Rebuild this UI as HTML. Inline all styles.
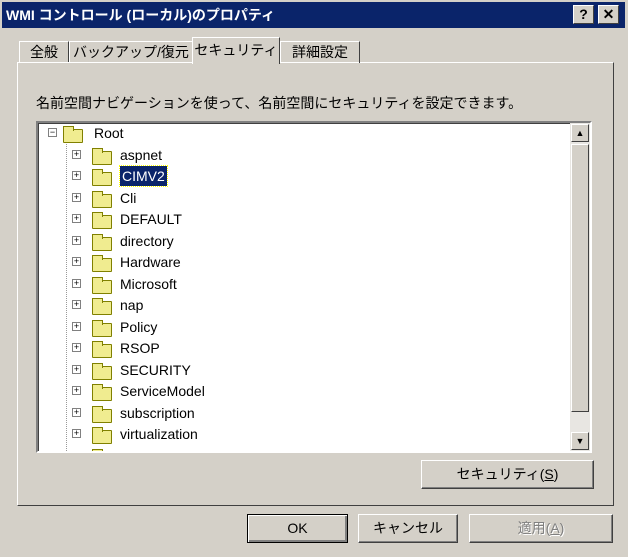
<!DOCTYPE html>
<html><head><meta charset="utf-8"><style>
*{box-sizing:border-box;margin:0;padding:0}
body{width:628px;height:557px;background:#d4d0c8;position:relative;overflow:hidden;font-family:"Liberation Sans","Noto Sans CJK JP",sans-serif;font-size:13px;color:#000}
.abs{position:absolute}
.title{left:2px;top:2px;width:623px;height:26px;background:#0a246a;color:#fff;font-weight:bold;font-size:14px;line-height:26px;padding-left:4px}
.tb{top:5px;width:21px;height:19px;background:#d4d0c8;border:1px solid;border-color:#fff #404040 #404040 #fff;color:#000;font-weight:bold;text-align:center;line-height:17px;font-size:14px}
.tab{top:41px;height:22px;border:1px solid;border-color:#fff #404040 transparent #fff;border-bottom:none;line-height:20px;text-align:center;font-size:14px}
.panel{left:17px;top:62px;width:597px;height:444px;border:1px solid;border-color:#fff #404040 #404040 #fff}
.tree{left:36px;top:121px;width:556px;height:332px;background:#fff;border:2px solid;border-color:#808080 #fff #fff #808080;box-shadow:inset 1px 1px 0 #404040;overflow:hidden}
.row{position:absolute;height:20px;line-height:20px;font-size:14px}
.fold{position:absolute;width:20px;height:14px;background:#f0ec90;border:1px solid #808000;border-radius:1px}
.fold:before{content:"";position:absolute;left:-1px;top:-4px;width:9px;height:4px;background:#f0ec90;border:1px solid #808000;border-bottom:none}
.pm{position:absolute;width:9px;height:9px;border:1px solid #808080;background:#fff;font-size:9px;line-height:7px;text-align:center}
.btn{height:29px;border:1px solid;border-color:#fff #404040 #404040 #fff;box-shadow:inset -1px -1px 0 #808080;text-align:center;line-height:27px;font-size:14px}
.sb{background:#d4d0c8;border:1px solid;border-color:#fff #404040 #404040 #fff;width:18px;height:18px;position:absolute;font-size:9px;text-align:center;line-height:16px}
</style></head><body>
<div class="abs title">WMI コントロール (ローカル)のプロパティ</div>
<div class="abs tb" style="left:573px">?</div>
<div class="abs tb" style="left:598px">✕</div>
<div class="abs tab" style="left:19px;width:50px">全般</div>
<div class="abs tab" style="left:69px;width:124px">バックアップ/復元</div>
<div class="abs panel"></div>
<div class="abs tab" style="left:192px;top:37px;height:27px;width:88px;background:#d4d0c8;line-height:24px">セキュリティ</div>
<div class="abs tab" style="left:280px;width:80px">詳細設定</div>
<div class="abs" style="left:36px;top:93px;font-size:14px">名前空間ナビゲーションを使って、名前空間にセキュリティを設定できます。</div>
<div class="abs tree">
<div class="abs" style="left:28px;top:12px;width:0;height:330px;border-left:1px dotted #999"></div>
<div class="pm" style="left:10px;top:5px">−</div>
<div class="fold" style="left:25px;top:6px"></div>
<div class="row" style="left:56px;top:0">Root</div>
<div id="rows"></div>
<div class="abs" style="right:0;top:0;width:20px;height:328px;background:#e8e6e2">
<div class="sb" style="left:1px;top:1px">▲</div>
<div class="sb" style="left:1px;top:21px;height:268px"></div>
<div class="sb" style="left:1px;top:309px">▼</div>
</div>
</div>
<div class="abs btn" style="left:421px;top:460px;width:173px">セキュリティ(<u>S</u>)</div>
<div class="abs btn" style="left:247px;top:514px;width:101px;border:1px solid #000;box-shadow:inset 1px 1px 0 #fff,inset -2px -2px 0 #808080">OK</div>
<div class="abs btn" style="left:358px;top:514px;width:100px">キャンセル</div>
<div class="abs btn" style="left:469px;top:514px;width:144px;color:#808080;text-shadow:1px 1px 0 #fff">適用(<u>A</u>)</div>
<script>
var n=["aspnet","CIMV2","Cli","DEFAULT","directory","Hardware","Microsoft","nap","Policy","RSOP","SECURITY","ServiceModel","subscription","virtualization","WMI"],h="";
n.forEach(function(t,i){var y=21.5*(i+1);
h+='<div class="pm" style="left:34px;top:'+(y+5)+'px">+</div><div class="fold" style="left:54px;top:'+(y+6)+'px"></div>'+
'<div class="row" style="left:82px;top:'+y+'px;'+(i==1?'background:#0a246a;color:#fff;padding:0 2px;outline:1px dotted #ff0':'')+'">'+t+'</div>';});
document.getElementById("rows").innerHTML=h;
</script>
</body></html>
